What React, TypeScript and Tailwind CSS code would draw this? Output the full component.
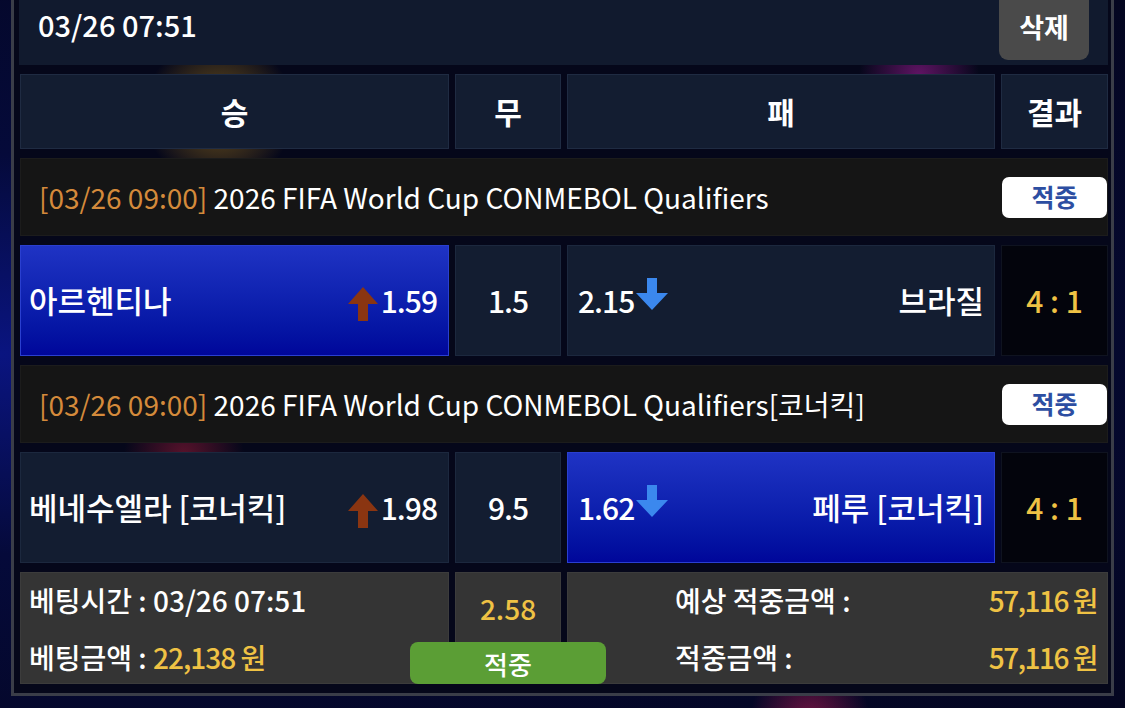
import React from "react";

function ArrowUp() {
  return (
    <svg width="30" height="34" viewBox="0 0 30 34" className="shrink-0 mt-[6px]">
      <path d="M15 0 L30 17 L20 17 L20 34 L10 34 L10 17 L0 17 Z" fill="#8a3511" />
    </svg>
  );
}

function ArrowDown() {
  return (
    <svg width="32" height="32" viewBox="0 0 32 32" className="shrink-0">
      <path d="M11 0 L21 0 L21 15 L32 15 L16 32 L0 15 L11 15 Z" fill="#3b88ee" />
    </svg>
  );
}

const blueCell =
  "bg-gradient-to-b from-[#1f33c4] to-[#00069a] border border-[#2a3fd0]";
const navyCell = "bg-[#131d31] border border-[#1c283e]";

function League({ title }: { title: string }) {
  return (
    <div className="h-[78px] bg-[#151515] border border-[#1c1c1c] flex items-center justify-between pl-[18px] pr-0">
      <div className="text-[28px] text-white">
        <span className="text-[#d48a3b]">[03/26 09:00]</span> {title}
      </div>
      <div className="w-[105px] h-[41px] bg-white rounded-[7px] flex items-center justify-center text-[25px] font-bold text-[#2d4ea2]">
        적중
      </div>
    </div>
  );
}

function Match({
  home,
  homeOdds,
  draw,
  away,
  awayOdds,
  score,
  pick,
}: {
  home: string;
  homeOdds: string;
  draw: string;
  away: string;
  awayOdds: string;
  score: string;
  pick: "home" | "away";
}) {
  return (
    <div className="grid grid-cols-[429px_106px_428px_107px] gap-x-[6px] h-[111px]">
      <div
        className={`${pick === "home" ? blueCell : navyCell} flex items-center justify-between pl-[8px] pr-[11px]`}
      >
        <span className="text-[31px] font-medium text-white">{home}</span>
        <span className="flex items-center gap-[3px]">
          <ArrowUp />
          <span className="text-[30px] tracking-[-1px] font-medium text-white">{homeOdds}</span>
        </span>
      </div>
      <div className={`${navyCell} flex items-center justify-center text-[30px] tracking-[-1px] font-medium text-white`}>
        {draw}
      </div>
      <div
        className={`${pick === "away" ? blueCell : navyCell} flex items-center justify-between pl-[10px] pr-[10px]`}
      >
        <span className="flex items-center gap-[2px]">
          <span className="text-[30px] tracking-[-1px] font-medium text-white">{awayOdds}</span>
          <span className="-mt-[14px]">
            <ArrowDown />
          </span>
        </span>
        <span className="text-[31px] font-medium text-white">{away}</span>
      </div>
      <div className="bg-[#03040c] border border-[#0f1320] flex items-center justify-center text-[30px] font-medium text-[#efc244]">
        {score}
      </div>
    </div>
  );
}

export default function App() {
  return (
    <div
      className="w-[1125px] h-[708px] overflow-hidden bg-[#040620] bg-[radial-gradient(circle_at_810px_720px,rgba(200,30,90,0.55)_0,transparent_60px),radial-gradient(ellipse_at_left,#0a1480_0%,#050a3a_40%,#040620_100%)]"
      style={{ fontFamily: '"Noto Sans CJK KR", "Noto Sans", sans-serif' }}
    >
      <div className="ml-[11px] w-[1103px] border-x-[3px] border-b-[3px] border-[#3a3d48] bg-[#05071a] bg-[radial-gradient(circle_at_205px_112px,rgba(190,140,30,0.6)_0,transparent_75px),radial-gradient(circle_at_905px_75px,rgba(170,30,160,0.55)_0,transparent_60px),radial-gradient(circle_at_170px_455px,rgba(170,30,60,0.5)_0,transparent_60px)] pl-[5px] pr-[3px] pb-[9px] flex flex-col gap-[9px]">
        {/* top bar */}
        <div className="h-[65px] bg-[#111a2e] flex items-start justify-between pl-[19px] pr-[19px]">
          <span className="mt-[3px] text-[29px] font-medium text-white">03/26 07:51</span>
          <div className="-mt-[8px] h-[68px] w-[90px] bg-[#4a4a4a] rounded-[9px] flex items-center justify-center pt-[2px] text-[27px] font-bold text-white">
            삭제
          </div>
        </div>

        {/* column heads */}
        <div className="grid grid-cols-[429px_106px_428px_107px] gap-x-[6px] h-[75px] pl-[1px]">
          {["승", "무", "패", "결과"].map((h) => (
            <div
              key={h}
              className="bg-[#131d31] border border-[#1f2b42] flex items-center justify-center text-[30px] font-bold text-white"
            >
              {h}
            </div>
          ))}
        </div>

        <div className="pl-[1px] flex flex-col gap-[9px]">
          <League title="2026 FIFA World Cup CONMEBOL Qualifiers" />
          <Match
            home="아르헨티나"
            homeOdds="1.59"
            draw="1.5"
            away="브라질"
            awayOdds="2.15"
            score="4 : 1"
            pick="home"
          />
          <League title="2026 FIFA World Cup CONMEBOL Qualifiers[코너킥]" />
          <Match
            home="베네수엘라 [코너킥]"
            homeOdds="1.98"
            draw="9.5"
            away="페루 [코너킥]"
            awayOdds="1.62"
            score="4 : 1"
            pick="away"
          />

          {/* summary */}
          <div className="relative grid grid-cols-[429px_106px_541px] gap-x-[6px] h-[112px]">
            <div className="bg-[#343434] border border-[#3c3c3c] flex flex-col justify-center gap-[15px] pl-[8px] text-[28px] font-medium text-white">
              <span>베팅시간 : 03/26 07:51</span>
              <span>
                베팅금액 : <span className="text-[#efc244] tracking-[-1px]">22,138 원</span>
              </span>
            </div>
            <div className="bg-[#343434] border border-[#3c3c3c] flex justify-center pt-[14px] text-[28px] font-medium text-[#efc244]">
              2.58
            </div>
            <div className="bg-[#343434] border border-[#3c3c3c] flex flex-col justify-center gap-[15px] pl-[107px] pr-[10px] text-[28px] font-medium text-white">
              <div className="flex justify-between">
                <span>예상 적중금액 :</span>
                <span className="text-[#efc244] tracking-[-1.5px]">57,116 원</span>
              </div>
              <div className="flex justify-between">
                <span>적중금액 :</span>
                <span className="text-[#efc244] tracking-[-1.5px]">57,116 원</span>
              </div>
            </div>
            <div className="absolute left-[390px] bottom-0 w-[196px] h-[42px] rounded-[8px] bg-[#5b9e35] flex items-center justify-center text-[26px] font-medium text-white">
              적중
            </div>
          </div>
        </div>
      </div>
    </div>
  );
}
